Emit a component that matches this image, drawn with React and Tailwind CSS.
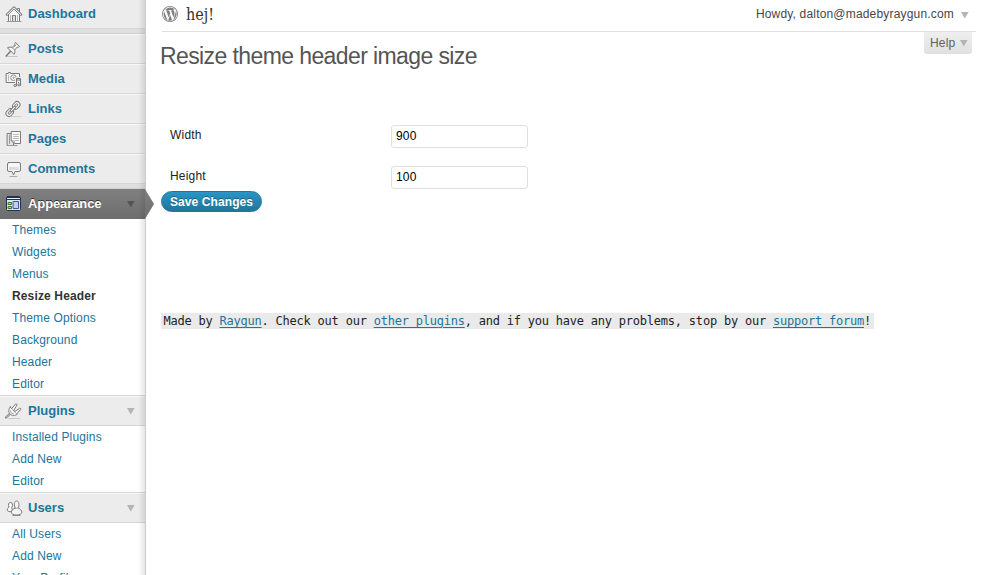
import React from 'react';

const stroke = { fill: 'none', stroke: '#7b7b7b', strokeWidth: 1, strokeLinejoin: 'round', strokeLinecap: 'round' };

function Icon({ children }) {
  return (
    <svg width="18" height="18" viewBox="0 0 18 18" className="ml-[5px] mr-[5px] shrink-0" {...stroke}>
      {children}
    </svg>
  );
}

const icons = {
  dashboard: (
    <Icon>
      <path d="M12.500 5V3.500h2v4" fill="#eee" />
      <path d="M3.500 9v7.500h11V9L9 4z" fill="#fafafa" />
      <path d="M2 9.700 9 2.700l7 7" strokeWidth="2.600" stroke="#828282" />
      <path d="M2.200 9.500 9 2.900l6.800 6.600" strokeWidth="1" stroke="#fff" />
      <path d="M7.500 16.500v-6h3v6" fill="#ddd" />
      <path d="M5.500 10.500v5.500M12.500 10.500v5.500" stroke="#b5b5b5" />
      <path d="M2 16.500h14" stroke="#999" />
    </Icon>
  ),
  posts: (
    <Icon>
      <path d="M1 16.500h11" stroke="#c4c4c4" />
      <path d="M1.200 16 6 10.700" stroke="#777" strokeWidth="1.4" />
      <path d="M2.800 7.700c1.600-.9 3-.7 4.200-.2L10 4.700c-.3-.9-.1-1.700.5-2.300L14.600 6.500c-.7.7-1.400.8-2.300.5L9.600 10c.6 1.300.6 2.600-.3 4z" fill="#f5f5f5" />
      <path d="m7 7.500 2.600 2.500M11 5 8.800 7.300" stroke="#999" />
    </Icon>
  ),
  media: (
    <Icon>
      <path d="M1.500 3.500h2v-1h2v1h9v9h-13z" fill="#f4f4f4" />
      <circle cx="8.500" cy="7.700" r="2.800" fill="#fff" stroke="#8a8a8a" />
      <circle cx="8.500" cy="7.700" r=".7" fill="#aaa" stroke="#aaa" />
      <path d="M3.500 5.500v5" stroke="#bbb" />
      <path d="M11.500 15V8.500h4V14" stroke="#ececec" strokeWidth="3" />
      <path d="M11.500 15.200V8.500h4v6M11.500 10h4" stroke="#777" />
      <ellipse cx="10.200" cy="15.500" rx="1.400" ry="1" fill="#ddd" />
      <ellipse cx="14.200" cy="14.900" rx="1.400" ry="1" fill="#ddd" />
    </Icon>
  ),
  links: (
    <Icon>
      <path d="M2 16.500h14" stroke="#cfcfcf" />
      <g transform="rotate(-48 8 9)">
        <rect x="-1" y="6" width="8.300" height="6" rx="3" fill="#f8f8f8" />
        <rect x="1.300" y="8" width="3.800" height="2" rx="1" stroke="#888" />
        <rect x="8.700" y="6" width="8.300" height="6" rx="3" fill="#f8f8f8" />
        <rect x="10.900" y="8" width="3.800" height="2" rx="1" stroke="#888" />
        <rect x="4.700" y="7.900" width="6.600" height="2.200" rx="1.100" fill="#fff" />
      </g>
    </Icon>
  ),
  pages: (
    <Icon>
      <path d="M2.500 3.500h6v12h-6z" fill="#e4e4e4" />
      <path d="M6.500 1.500h9v12H9.300l-2.800-2.600z" fill="#fafafa" />
      <path d="M6.500 10.900h2.800v2.600M4.500 5.500v8" stroke="#999" />
      <path d="M8.500 4.500h5M8.500 6.500h5M8.500 8.500h5M10.500 10.500h3" stroke="#b8b8b8" />
      <path d="M3 15.500h9" stroke="#999" />
    </Icon>
  ),
  comments: (
    <Icon>
      <path d="M3.500 2.500h10.500q1.500 0 1.500 1.500v6q0 1.500-1.500 1.500h-4L8.500 15 7 11.500H4Q2.500 11.500 2.500 10V4q0-1.500 1.500-1.500z" fill="#f7f7f7" />
      <path d="M4 7h10v3H4z" fill="#dedede" stroke="none" />
      <path d="M5 16.500h7" stroke="#aaa" />
    </Icon>
  ),
  appearance: (
    <Icon>
      <rect x="1.500" y="1.500" width="14" height="14" rx="1" fill="#cfeaf2" stroke="#26304d" />
      <path d="M2 2h13v3H2z" fill="#26304d" stroke="none" />
      <path d="M2.500 3.500h12" stroke="#eef3fa" />
      <path d="M3.500 7.500h3v2h-3zM3.500 11.500h3v2h-3z" fill="#b7dc88" stroke="#426e35" />
      <path d="M8.500 6.500h5v7h-5z" fill="#c3cdf8" stroke="#4756a0" />
    </Icon>
  ),
  plugins: (
    <Icon>
      <path d="M3 16.500h12" stroke="#ccc" />
      <path d="m1 15.500 4-3.800" stroke="#777" strokeWidth="2.200" />
      <path d="m1.200 15.300 4-3.800" stroke="#eee" strokeWidth=".8" />
      <path d="M5.200 5 12.500 12c-2.600 2.100-5.800 1.700-7.500 0S3.300 7.300 5.200 5z" fill="#f5f5f5" />
      <path d="m6.800 6.500 3.700-4.500q1.200-.6 1.500.8L8.800 8.300M10 9.500l4.700-3.300q1.400 0 .9 1.400L12 11.500" fill="#fff" />
      <path d="M5 8.500q.3 3 3.500 3.500" stroke="#aaa" />
    </Icon>
  ),
  users: (
    <Icon>
      <path d="M7 12.300c-2.500 1-4.700.2-4.700-1.500 0-1.200.7-2 1.700-2.500C3 6 3.500 3.300 5.500 3.300S8 6 7 8.300z" fill="#fafafa" />
      <path d="M10.300 9C8.700 6.500 9 2 11.600 2s3 4.500 1.500 7c2.200.8 3.700 2.500 3.700 4.300 0 3.600-10.500 3.600-10.500 0 0-1.800 1.600-3.500 4-4.300z" fill="#f4f4f4" />
      <path d="M10.300 9q1.300.9 2.800 0" stroke="#aaa" />
      <path d="M8 16.500h7" stroke="#888" />
    </Icon>
  ),
};

function Arrow({ className = '' }) {
  return (
    <svg width="8" height="7" viewBox="0 0 8 7" className={'shrink-0 ' + className}>
      <path d="M0 0h7.600L3.800 6.600z" fill="currentColor" />
    </svg>
  );
}

function MenuHead({ icon, label, arrow }) {
  return (
    <div className="flex h-[30px] items-center border-t border-b border-t-[#f9f9f9] border-b-[#d6d6d6] bg-[#ececec] text-[13px] font-bold text-[#21759b]">
      {icons[icon]}
      <span>{label}</span>
      {arrow && <Arrow className="ml-auto mr-[10px] text-[#b4b4b4]" />}
    </div>
  );
}

function Separator() {
  return <div className="h-[5px] border-b border-[#cfcfcf] bg-[#dfdfdf]" />;
}

function SubMenu({ items, current }) {
  return (
    <ul className="text-[12px] leading-[22px] tracking-[0.14px]">
      {items.map((t) => (
        <li key={t} className={'pl-3 h-[22px] whitespace-nowrap ' + (t === current ? 'font-bold text-[#333]' : 'text-[#21759b]')}>
          {t}
        </li>
      ))}
    </ul>
  );
}

function Sidebar() {
  return (
    <nav className="relative w-[146px] h-[575px] shrink-0">
      <div className="h-full overflow-hidden border-r border-[#cccccc]">
        <div className="-mt-px">
          <MenuHead icon="dashboard" label="Dashboard" />
          <Separator />
          <MenuHead icon="posts" label="Posts" />
          <MenuHead icon="media" label="Media" />
          <MenuHead icon="links" label="Links" />
          <MenuHead icon="pages" label="Pages" />
          <MenuHead icon="comments" label="Comments" />
          <Separator />
          <div className="flex h-[30px] items-center bg-linear-to-b from-[#808080] to-[#6d6d6d] text-[13px] font-bold text-white [text-shadow:0_-1px_0_#333]">
            {icons.appearance}
            <span className="tracking-[-0.1px]">Appearance</span>
            <Arrow className="ml-auto mr-[10px] text-[#555]" />
          </div>
          <SubMenu
            current="Resize Header"
            items={['Themes', 'Widgets', 'Menus', 'Resize Header', 'Theme Options', 'Background', 'Header', 'Editor']}
          />
          <div className="h-px bg-[#d6d6d6]" />
          <MenuHead icon="plugins" label="Plugins" arrow />
          <SubMenu items={['Installed Plugins', 'Add New', 'Editor']} />
          <div className="h-px bg-[#d6d6d6]" />
          <MenuHead icon="users" label="Users" arrow />
          <SubMenu items={['All Users', 'Add New', 'Your Profile']} />
        </div>
      </div>
      <div className="absolute top-0 right-px h-full w-[7px] bg-linear-to-r from-black/0 to-black/10" />
      <div className="absolute top-[189px] left-[145px] h-[30px] w-[9px] bg-linear-to-b from-[#808080] to-[#6d6d6d] [clip-path:polygon(0_0,100%_50%,0_100%)]" />
    </nav>
  );
}

function WordPressLogo() {
  return (
    <svg width="16" height="16" viewBox="0 0 24 24" fill="#808080">
      <path d="M12 0a12 12 0 1 0 0 24 12 12 0 0 0 0-24zm0 1.200a10.800 10.800 0 1 1 0 21.600 10.800 10.800 0 0 1 0-21.600z" />
      <path d="M3.300 8.200 8.200 21.300A10 10 0 0 1 3.300 8.200zM4.200 6.600a10 10 0 0 1 14.700-2c-1.600.2-1.900 1.700-1.300 2.900.7 1.300 1.600 2.300 1.300 4.300l-1.700 5.300-3.700-10.200 1.400-.2v-.6H9.500v.6l1.300.2 1.500 4.100-2.300 6.300L6.400 6.900l1.400-.2v-.6zM12.200 13l3 8.400a10 10 0 0 1-6 .2zM20.800 7.300a10 10 0 0 1-3.900 13.300l3-8.800c.6-1.700.9-3 .9-4.500z" />
    </svg>
  );
}

function Field({ label, value }) {
  return (
    <div className="flex h-[41px] items-start">
      <label className="w-[230px] pl-[9px] text-[12px] leading-[18px] tracking-[0.2px] text-[#222]">{label}</label>
      <input
        defaultValue={value}
        className="h-[23px] w-[137px] -mt-px rounded-[3px] border border-[#dfdfdf] bg-white px-1 pb-[2px] text-[12px] tracking-[0.2px] text-black outline-none"
      />
    </div>
  );
}

function Link({ children }) {
  return <a className="text-[#21759b] underline underline-offset-2">{children}</a>;
}

export default function App() {
  return (
    <div className="flex h-[575px] w-[986px] overflow-hidden bg-white font-['Liberation_Sans',Arial,sans-serif]">
      <Sidebar />
      <main className="min-w-0 flex-1 pl-[15px]">
        <header className="ml-px mr-[10px] flex h-8 items-start border-b border-[#dfdfdf]">
          <div className="mt-[6px]"><WordPressLogo /></div>
          <h1 className="ml-2 mt-[5px] font-['DejaVu_Serif_Condensed','DejaVu_Serif',serif] text-[16px] leading-[20px] text-[#333]">hej!</h1>
          <div className="ml-auto mr-[7px] mt-[6px] flex items-center text-[12px] leading-4 tracking-[0.18px] text-[#464646]">
            <span>Howdy, dalton@madebyraygun.com</span>
            <Arrow className="ml-[7px] mt-[2px] text-[#b4b4b4]" />
          </div>
        </header>
        <div className="flex items-start justify-between pr-[14px]">
          <h2 className="mt-[9px] -ml-px whitespace-nowrap text-[23px] leading-[30px] tracking-[-0.6px] text-[#555]">
            Resize theme header image size
          </h2>
          <div className="flex h-[22px] w-[48px] items-center rounded-b-[3px] bg-linear-to-b from-[#efefef] to-[#e0e0e0] pl-[6px] text-[12px] tracking-[0.2px] text-[#606060]">
            <span>Help</span>
            <Arrow className="ml-[5px] text-[#b4b4b4]" />
          </div>
        </div>
        <form className="mt-[55px]">
          <Field label="Width" value="900" />
          <Field label="Height" value="100" />
        </form>
        <button className="-mt-[17px] block h-[21px] w-[101px] rounded-full border border-[#21759b] bg-linear-to-b from-[#2a95c5] to-[#21759b] text-[12px] leading-[20px] font-bold tracking-[0.1px] text-white [text-shadow:0_-1px_0_rgba(0,0,0,0.3)]">
          Save Changes
        </button>
        <p className="mt-[101px]">
          <code className="block h-4 w-[713px] bg-[#eaeaea] pl-[2.500px] font-['DejaVu_Sans_Mono',monospace] text-[12px] leading-[17px] tracking-[-0.22px] whitespace-nowrap text-[#222]">
            Made by <Link>Raygun</Link>. Check out our <Link>other plugins</Link>, and if you have any problems, stop by our{' '}
            <Link>support forum</Link>!
          </code>
        </p>
      </main>
    </div>
  );
}
